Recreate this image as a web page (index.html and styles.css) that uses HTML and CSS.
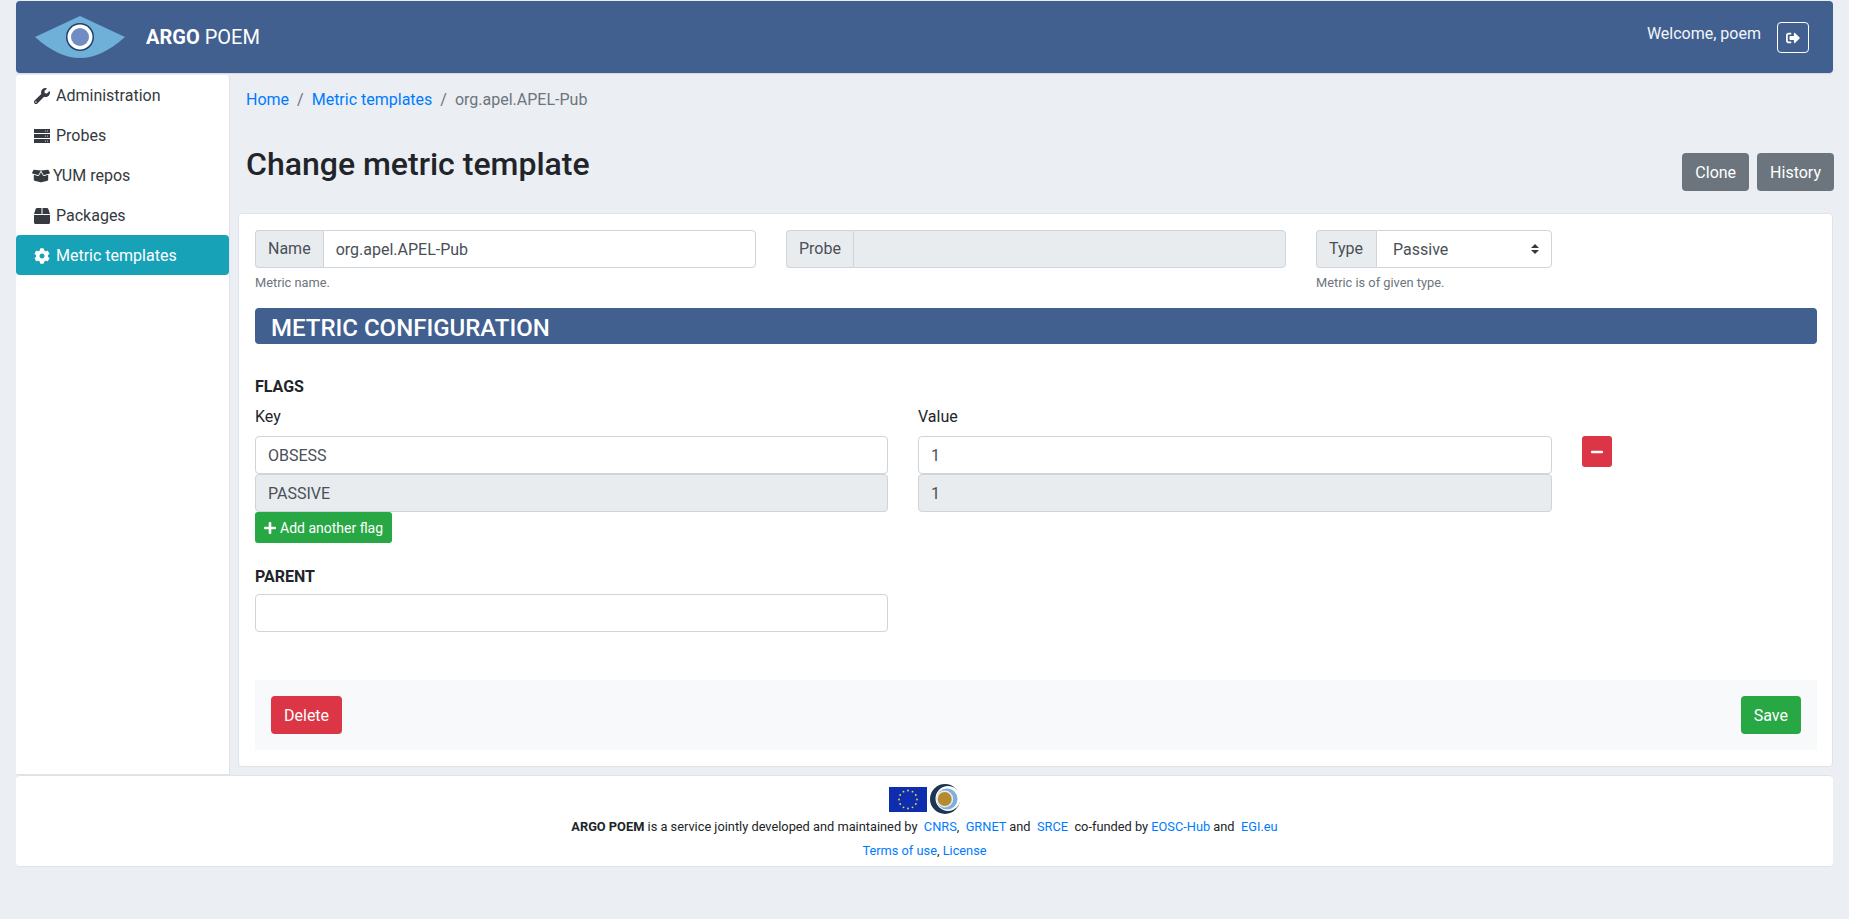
FILE: index.html
```html
<!DOCTYPE html>
<html lang="en">
<head>
    <meta charset="UTF-8">
    <title>ARGO POEM | Change metric template</title>
    <meta name="viewport" content="width=device-width, initial-scale=1.0">
    <link rel="stylesheet" href="styles.css">
</head>
<body>
    <div class="page">
        <header class="topbar">
            <div class="brand">
                <svg class="brand-logo" viewBox="0 0 90 42">
                    <path d="M0 21 L45 0 L90 21 C74 35 60 42 45 42 C30 42 16 35 0 21Z" fill="#6fb0d8"/>
                    <circle cx="45" cy="21" r="14" fill="#24406e"/>
                    <circle cx="45" cy="21" r="12.5" fill="#fff"/>
                    <circle cx="45" cy="21" r="9" fill="#6f8cc4"/>
                </svg>
                <span class="brand-name"><b>ARGO</b> POEM</span>
            </div>
            <div class="user">
                <span class="welcome">Welcome, poem</span>
                <button class="logout" type="button">
                    <svg class="icon" viewBox="0 0 512 512"><path d="M497 273L329 441c-15 15-41 4.500-41-17v-96H152c-13.300 0-24-10.700-24-24v-96c0-13.300 10.700-24 24-24h136V88c0-21.400 25.900-32 41-17l168 168c9.300 9.400 9.300 24.600 0 34zM192 436v-40c0-6.600-5.400-12-12-12H96c-17.700 0-32-14.300-32-32V160c0-17.700 14.300-32 32-32h84c6.600 0 12-5.400 12-12V76c0-6.600-5.400-12-12-12H96c-53 0-96 43-96 96v192c0 53 43 96 96 96h84c6.600 0 12-5.400 12-12z"/></svg>
                </button>
            </div>
        </header>

        <div class="columns">
            <nav class="sidebar">
                <a class="nav-item" href="#">
                    <svg class="icon nav-icon" viewBox="0 0 512 512"><path d="M507.730 109.100c-2.240-9.030-13.540-12.090-20.120-5.510l-74.360 74.360-67.880-11.310-11.310-67.880 74.360-74.360c6.620-6.620 3.430-17.900-5.660-20.160-47.380-11.740-99.550.91-136.580 37.930-39.640 39.640-50.550 97.100-34.050 147.200L18.740 402.760c-24.990 24.990-24.990 65.510 0 90.500 24.990 24.990 65.510 24.990 90.500 0l213.210-213.210c50.120 16.710 107.470 5.680 147.370-34.220 37.070-37.070 49.700-89.320 37.910-136.730zM64 472c-13.250 0-24-10.750-24-24 0-13.260 10.750-24 24-24s24 10.740 24 24c0 13.250-10.750 24-24 24z"/></svg>
                    Administration
                </a>
                <a class="nav-item" href="#">
                    <svg class="icon nav-icon" viewBox="0 0 512 512"><path fill-rule="evenodd" d="M0 32h512v128H0zm432 48a16 16 0 1 0 0 32 16 16 0 0 0 0-32zm-64 0a16 16 0 1 0 0 32 16 16 0 0 0 0-32zM0 192h512v128H0zm432 48a16 16 0 1 0 0 32 16 16 0 0 0 0-32zm-64 0a16 16 0 1 0 0 32 16 16 0 0 0 0-32zM0 352h512v128H0zm432 48a16 16 0 1 0 0 32 16 16 0 0 0 0-32zm-64 0a16 16 0 1 0 0 32 16 16 0 0 0 0-32z"/></svg>
                    Probes
                </a>
                <a class="nav-item nav-item-wide" href="#">
                    <svg class="icon nav-icon-wide" viewBox="0 0 640 512"><path d="M425.700 256c-16.900 0-32.800-9-41.400-23.400L320 126l-64.200 106.600c-8.700 14.500-24.600 23.500-41.500 23.500-4.500 0-9-.6-13.300-1.900L64 215v178c0 14.700 10 27.500 24.200 31l216.200 54.100c10.200 2.500 20.900 2.500 31 0L551.800 424c14.200-3.600 24.200-16.400 24.200-31V215l-137 39.100c-4.300 1.300-8.800 1.900-13.300 1.900zm212.600-112.200L586.800 41c-3.100-6.200-9.800-9.800-16.700-8.900L320 64l91.700 152.100c3.800 6.300 11.400 9.300 18.500 7.300l197.900-56.500c9.900-2.900 14.700-13.900 10.200-23.100zM53.200 41L1.700 143.800c-4.600 9.200.3 20.200 10.100 23l197.900 56.500c7.100 2 14.700-1 18.500-7.300L320 64 69.800 32.100c-6.900-.8-13.500 2.700-16.600 8.900z"/></svg>
                    YUM repos
                </a>
                <a class="nav-item" href="#">
                    <svg class="icon nav-icon" viewBox="0 0 512 512"><path d="M509.500 184.600L458.900 32.800C452.400 13.200 434.100 0 413.400 0H272v192h238.700c-.4-2.500-.4-5-1.200-7.400zM240 0H98.600c-20.700 0-39 13.200-45.500 32.800L2.500 184.600c-.8 2.400-.8 4.900-1.200 7.400H240V0zM0 224v240c0 26.500 21.500 48 48 48h416c26.500 0 48-21.500 48-48V224H0z"/></svg>
                    Packages
                </a>
                <a class="nav-item active" href="#">
                    <svg class="icon nav-icon" viewBox="0 0 512 512"><path d="M487.400 315.700l-42.600-24.600c4.300-23.200 4.300-47 0-70.200l42.600-24.600c4.900-2.800 7.100-8.600 5.500-14-11.100-35.600-30-67.800-54.700-94.600-3.800-4.100-10-5.100-14.800-2.300L380.800 110c-17.900-15.400-38.500-27.300-60.800-35.100V25.800c0-5.600-3.900-10.500-9.400-11.700-36.700-8.200-74.300-7.800-109.200 0-5.500 1.200-9.400 6.100-9.400 11.700V75c-22.200 7.900-42.800 19.800-60.800 35.100L88.700 85.500c-4.900-2.800-11-1.900-14.800 2.300-24.700 26.700-43.600 58.900-54.700 94.600-1.700 5.400.6 11.200 5.500 14L67.300 221c-4.300 23.200-4.300 47 0 70.200l-42.600 24.600c-4.900 2.800-7.100 8.600-5.500 14 11.100 35.600 30 67.800 54.700 94.600 3.800 4.100 10 5.100 14.800 2.300l42.600-24.600c17.900 15.400 38.500 27.300 60.800 35.100v49.200c0 5.600 3.900 10.500 9.400 11.700 36.700 8.200 74.300 7.800 109.200 0 5.500-1.200 9.400-6.100 9.400-11.700v-49.200c22.200-7.900 42.800-19.800 60.800-35.100l42.600 24.600c4.900 2.800 11 1.900 14.800-2.300 24.700-26.700 43.600-58.900 54.700-94.600 1.500-5.500-.7-11.300-5.600-14.100zM256 336c-44.100 0-80-35.900-80-80s35.900-80 80-80 80 35.900 80 80-35.900 80-80 80z"/></svg>
                    Metric templates
                </a>
            </nav>

            <main class="content">
                <ol class="breadcrumb">
                    <li><a href="#">Home</a></li>
                    <li class="sep">/</li>
                    <li><a href="#">Metric templates</a></li>
                    <li class="sep">/</li>
                    <li class="current">org.apel.APEL-Pub</li>
                </ol>

                <div class="title-row">
                    <h2>Change metric template</h2>
                    <div class="title-actions">
                        <button class="btn btn-gray" type="button">Clone</button>
                        <button class="btn btn-gray" type="button">History</button>
                    </div>
                </div>

                <form class="card">
                    <div class="field-row">
                        <div class="field">
                            <div class="input-group">
                                <span class="addon">Name</span>
                                <input class="input" type="text" value="org.apel.APEL-Pub">
                            </div>
                            <small>Metric name.</small>
                        </div>
                        <div class="field">
                            <div class="input-group">
                                <span class="addon">Probe</span>
                                <input class="input" type="text" disabled>
                            </div>
                        </div>
                        <div class="field field-type">
                            <div class="input-group">
                                <span class="addon">Type</span>
                                <select class="input select">
                                    <option>Passive</option>
                                </select>
                            </div>
                            <small>Metric is of given type.</small>
                        </div>
                    </div>

                    <h4 class="section-bar">METRIC CONFIGURATION</h4>

                    <h6 class="group-title">FLAGS</h6>
                    <div class="flags">
                        <span class="col-label">Key</span>
                        <span class="col-label">Value</span>
                        <span></span>
                        <input class="input" type="text" value="OBSESS">
                        <input class="input" type="text" value="1">
                        <button class="btn-remove" type="button">
                            <svg class="icon" viewBox="0 0 448 512"><path d="M416 208H32c-17.670 0-32 14.330-32 32v32c0 17.670 14.330 32 32 32h384c17.670 0 32-14.330 32-32v-32c0-17.670-14.330-32-32-32z"/></svg>
                        </button>
                        <input class="input" type="text" value="PASSIVE" disabled>
                        <input class="input" type="text" value="1" disabled>
                    </div>
                    <button class="btn-add" type="button">
                        <svg class="icon" viewBox="0 0 448 512"><path d="M416 208H272V64c0-17.670-14.330-32-32-32h-32c-17.670 0-32 14.330-32 32v144H32c-17.670 0-32 14.330-32 32v32c0 17.670 14.330 32 32 32h144v144c0 17.670 14.330 32 32 32h32c17.670 0 32-14.330 32-32V304h144c17.670 0 32-14.330 32-32v-32c0-17.670-14.330-32-32-32z"/></svg>
                        Add another flag
                    </button>

                    <h6 class="group-title parent-title">PARENT</h6>
                    <div class="parent-input">
                        <input class="input" type="text">
                    </div>

                    <div class="form-actions">
                        <button class="btn btn-red" type="button">Delete</button>
                        <button class="btn btn-green" type="button">Save</button>
                    </div>
                </form>
            </main>
        </div>

        <footer class="footer">
            <div class="footer-logos">
                <svg class="eu-flag" viewBox="0 0 38 25">
                    <rect width="38" height="25" fill="#0f2eaf"/>
                    <g fill="#eedc3a">
                        <circle cx="19" cy="3.500" r=".9"/><circle cx="23.500" cy="4.700" r=".9"/><circle cx="26.800" cy="8" r=".9"/>
                        <circle cx="28" cy="12.500" r=".9"/><circle cx="26.800" cy="17" r=".9"/><circle cx="23.500" cy="20.300" r=".9"/>
                        <circle cx="19" cy="21.500" r=".9"/><circle cx="14.500" cy="20.300" r=".9"/><circle cx="11.200" cy="17" r=".9"/>
                        <circle cx="10" cy="12.500" r=".9"/><circle cx="11.200" cy="8" r=".9"/><circle cx="14.500" cy="4.700" r=".9"/>
                    </g>
                </svg>
                <svg class="argo-mark" viewBox="0 0 30 30">
                    <circle cx="15" cy="15" r="15" fill="#1d3550"/>
                    <circle cx="18" cy="14.500" r="12.500" fill="#fff"/>
                    <circle cx="17" cy="15" r="10.500" fill="#7fb0dc"/>
                    <circle cx="14.700" cy="15" r="8.500" fill="#e8eef4"/>
                    <circle cx="14.700" cy="15" r="7" fill="#b58a30"/>
                </svg>
            </div>
            <p class="footer-text"><b>ARGO POEM</b> is a service jointly developed and maintained by &nbsp;<a href="#">CNRS</a>, &nbsp;<a href="#">GRNET</a> and &nbsp;<a href="#">SRCE</a> &nbsp;co-funded by <a href="#">EOSC-Hub</a> and &nbsp;<a href="#">EGI.eu</a></p>
            <p class="footer-text footer-links"><a href="#">Terms of use</a>, <a href="#">License</a></p>
        </footer>
    </div>
</body>
</html>
```

FILE: styles.css
```css
* {
    box-sizing: border-box;
}
body {
    margin: 0;
    min-height: 919px;
    background: #ebeef3;
    color: #212529;
    font-family: Roboto, sans-serif;
    font-size: 16px;
    line-height: 1.5;
}
a {
    color: #007bff;
    text-decoration: none;
}
.icon {
    display: inline-block;
    fill: currentColor;
}
.page {
    padding: 1px 16px 0;
}

/* top bar */
.topbar {
    display: flex;
    justify-content: space-between;
    height: 72px;
    background: #416090;
    border-radius: 4px;
    color: #fff;
    box-shadow: 0 1px 1px #d5d9e0;
}
.brand {
    display: flex;
    align-items: center;
    padding-left: 19px;
}
.brand-logo {
    width: 90px;
    height: 42px;
}
.brand-name {
    margin-left: 21px;
    font-size: 20px;
    font-weight: 400;
}
.brand-name b {
    font-weight: 700;
}
.user {
    display: flex;
    align-items: flex-start;
    padding: 21px 24px 0 0;
}
.welcome {
    color: #f2f5f9;
}
.logout {
    display: flex;
    align-items: center;
    justify-content: center;
    width: 32px;
    height: 31px;
    margin-left: 16px;
    padding: 0;
    background: transparent;
    border: 1px solid #fff;
    border-radius: 4px;
    color: #fff;
}
.logout .icon {
    width: 14px;
    height: 14px;
}

/* sidebar and main column */
.columns {
    display: grid;
    grid-template-columns: 214px 1fr;
    margin-top: 2px;
}
.sidebar {
    height: 700px;
    background: #fff;
    border-right: 1px solid #dfe3e8;
    border-bottom: 1px solid #dfe3e8;
    border-radius: 4px 4px 0 0;
}
.nav-item {
    display: flex;
    align-items: center;
    height: 40px;
    padding: 2px 0 0 18px;
    border-radius: 4px;
    color: #343a40;
}
.nav-item.active {
    background: #17a2b8;
    color: #fff;
}
.nav-icon {
    width: 16px;
    height: 16px;
    margin-right: 6px;
}
.nav-item-wide {
    padding-left: 16px;
}
.nav-icon-wide {
    width: 18px;
    height: 16px;
    margin-right: 3px;
}
.content {
    padding-left: 8px;
}
.breadcrumb {
    display: flex;
    gap: 8px;
    margin: 0;
    padding: 13px 8px 0;
    list-style: none;
}
.sep,
.current {
    color: #6c757d;
}
.title-row {
    display: flex;
    justify-content: space-between;
    align-items: flex-end;
    margin-top: 33px;
    padding-left: 8px;
}
h2 {
    margin: 0 0 8px;
    font-size: 32px;
    font-weight: 500;
    line-height: 38px;
}
.title-actions {
    display: flex;
    gap: 8px;
    margin-right: -1px;
}
.btn {
    height: 38px;
    padding: 0 12px;
    border: 1px solid transparent;
    border-radius: 4px;
    color: #fff;
    font-family: inherit;
    font-size: 16px;
}
.btn-gray {
    background: #6c757d;
}
.btn-red {
    background: #dc3545;
}
.btn-green {
    background: #28a745;
}

/* form card */
.card {
    margin-top: 22px;
    height: 554px;
    padding: 16px 15px 16px 16px;
    background: #fff;
    border: 1px solid #dfe3e8;
    border-radius: 4px;
}
.field-row {
    display: grid;
    grid-template-columns: 501px 500px 236px;
    column-gap: 30px;
    height: 78px;
}
.field small {
    display: block;
    margin-top: 5px;
    color: #6c757d;
    font-size: 12.8px;
    line-height: 19px;
}
.input-group {
    display: flex;
    height: 38px;
}
.addon {
    padding: 6px 12px;
    background: #e9ecef;
    border: 1px solid #ced4da;
    border-right: 0;
    border-radius: 4px 0 0 4px;
    color: #495057;
}
.field-type .addon {
    padding-right: 13px;
}
.input {
    display: block;
    width: 100%;
    height: 38px;
    padding: 6px 12px;
    background: #fff;
    border: 1px solid #ced4da;
    border-radius: 4px;
    color: #495057;
    font-family: inherit;
    font-size: 16px;
}
.input:disabled {
    background: #e9ecef;
    opacity: 1;
}
.input-group .input {
    flex: 1;
    min-width: 0;
    border-radius: 0 4px 4px 0;
}
.select {
    padding-left: 16px;
    appearance: none;
    background: #fff url("data:image/svg+xml,%3csvg xmlns='http://www.w3.org/2000/svg' width='4' height='5' viewBox='0 0 4 5'%3e%3cpath fill='%23343a40' d='M2 0L0 2h4zm0 5L0 3h4z'/%3e%3c/svg%3e") no-repeat right 12px center / 8px 10px;
}
.section-bar {
    height: 36px;
    margin: 0;
    padding-left: 16px;
    background: #416090;
    border-radius: 4px;
    color: #fff;
    font-size: 24px;
    font-weight: 500;
    line-height: 40px;
}
.group-title {
    margin: 31px 0 0;
    font-size: 16px;
    font-weight: 700;
    line-height: 24px;
}
.flags {
    display: grid;
    grid-template-columns: 633px 634px 60px;
    column-gap: 30px;
    justify-content: start;
    margin-top: 6px;
}
.col-label {
    height: 31px;
    line-height: 24px;
}
.btn-remove {
    display: flex;
    align-items: center;
    justify-content: center;
    width: 30px;
    height: 31px;
    padding: 0;
    background: #dc3545;
    border: 0;
    border-radius: 3px;
    color: #fff;
}
.btn-remove .icon {
    width: 12px;
    height: 14px;
}
.btn-add {
    display: flex;
    align-items: center;
    height: 31px;
    padding: 0 9px;
    background: #28a745;
    border: 0;
    border-radius: 3px;
    color: #fff;
    font-family: inherit;
    font-size: 14px;
}
.btn-add .icon {
    width: 12px;
    height: 14px;
    margin-right: 4px;
}
.parent-title {
    margin-top: 22px;
}
.parent-input {
    width: 633px;
    margin-top: 5px;
}
.form-actions {
    display: flex;
    justify-content: space-between;
    margin-top: 48px;
    padding: 16px;
    background: #f8f9fa;
}

/* footer */
.footer {
    height: 92px;
    padding-top: 8px;
    background: #fff;
    border-top: 1px solid #dfe3e8;
    border-bottom: 1px solid #dfe3e8;
    border-radius: 4px;
    text-align: center;
}
.footer-logos {
    display: flex;
    justify-content: center;
    align-items: center;
    gap: 3px;
    height: 30px;
}
.eu-flag {
    width: 38px;
    height: 25px;
}
.argo-mark {
    width: 30px;
    height: 30px;
}
.footer-text {
    margin: 4px 0 0;
    font-size: 12.8px;
    line-height: 18px;
}
.footer-links {
    margin-top: 6px;
}
```
